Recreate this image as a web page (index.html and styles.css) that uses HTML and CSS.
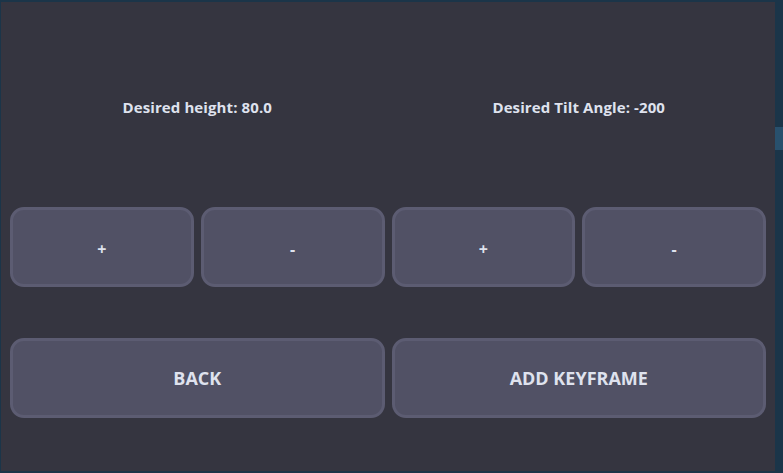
FILE: index.html
```html
<!DOCTYPE html>
<html>
<head>
<meta charset="utf-8">
<link rel="stylesheet" href="styles.css">
</head>
<body>
<div class="frame">
  <div class="topstrip"></div>
  <div class="middle">
    <div class="leftstrip"></div>
    <div class="panel">
      <div class="labels">
        <div class="label">Desired height: 80.0</div>
        <div class="label">Desired Tilt Angle: -200</div>
      </div>
      <div class="row four">
        <button class="btn small">+</button>
        <button class="btn small">-</button>
        <button class="btn small">+</button>
        <button class="btn small">-</button>
      </div>
      <div class="row two">
        <button class="btn big">BACK</button>
        <button class="btn big">ADD KEYFRAME</button>
      </div>
    </div>
    <div class="scrollbar"><div class="thumb"></div></div>
  </div>
  <div class="bottomstrip"></div>
</div>
</body>
</html>
```

FILE: styles.css
```css
html, body {
  margin: 0;
  padding: 0;
  width: 783px;
  height: 473px;
  overflow: hidden;
  background: #1b3549;
}
.frame {
  display: flex;
  flex-direction: column;
  width: 783px;
  height: 473px;
}
.topstrip {
  height: 2px;
  background: #1b3549;
  flex: none;
}
.bottomstrip {
  height: 2px;
  background: #1b3549;
  flex: none;
}
.middle {
  display: flex;
  flex: 1;
}
.leftstrip {
  width: 1px;
  background: #1b3549;
  flex: none;
}
.panel {
  width: 774px;
  flex: none;
  background: #353540;
  padding: 0 9px;
  box-sizing: border-box;
  font-family: "Open Sans", "Noto Sans", sans-serif;
  color: #dfe2ee;
}
.labels {
  display: grid;
  grid-template-columns: 1fr 1fr;
  gap: 7px;
  margin-top: 95px;
}
.label {
  text-align: center;
  font-weight: 700;
  font-size: 15px;
  line-height: 20px;
  letter-spacing: 0.1px;
}
.row {
  display: grid;
  gap: 7px;
}
.row.four {
  grid-template-columns: repeat(4, 1fr);
  margin-top: 90px;
}
.row.two {
  grid-template-columns: 1fr 1fr;
  margin-top: 51px;
}
.btn {
  height: 80px;
  box-sizing: border-box;
  border: 3px solid #5c5c72;
  border-radius: 14px;
  background: #515165;
  color: #dfe2ee;
  font-family: "Open Sans", "Noto Sans", sans-serif;
  font-weight: 700;
  padding: 0;
}
.btn.small {
  font-size: 16px;
  padding-top: 4px;
}
.btn.big {
  font-size: 18px;
}
.scrollbar {
  flex: 1;
  background: #1b3549;
  position: relative;
}
.thumb {
  position: absolute;
  top: 125px;
  left: 0;
  right: 0;
  height: 23px;
  background: #28506d;
}
```
